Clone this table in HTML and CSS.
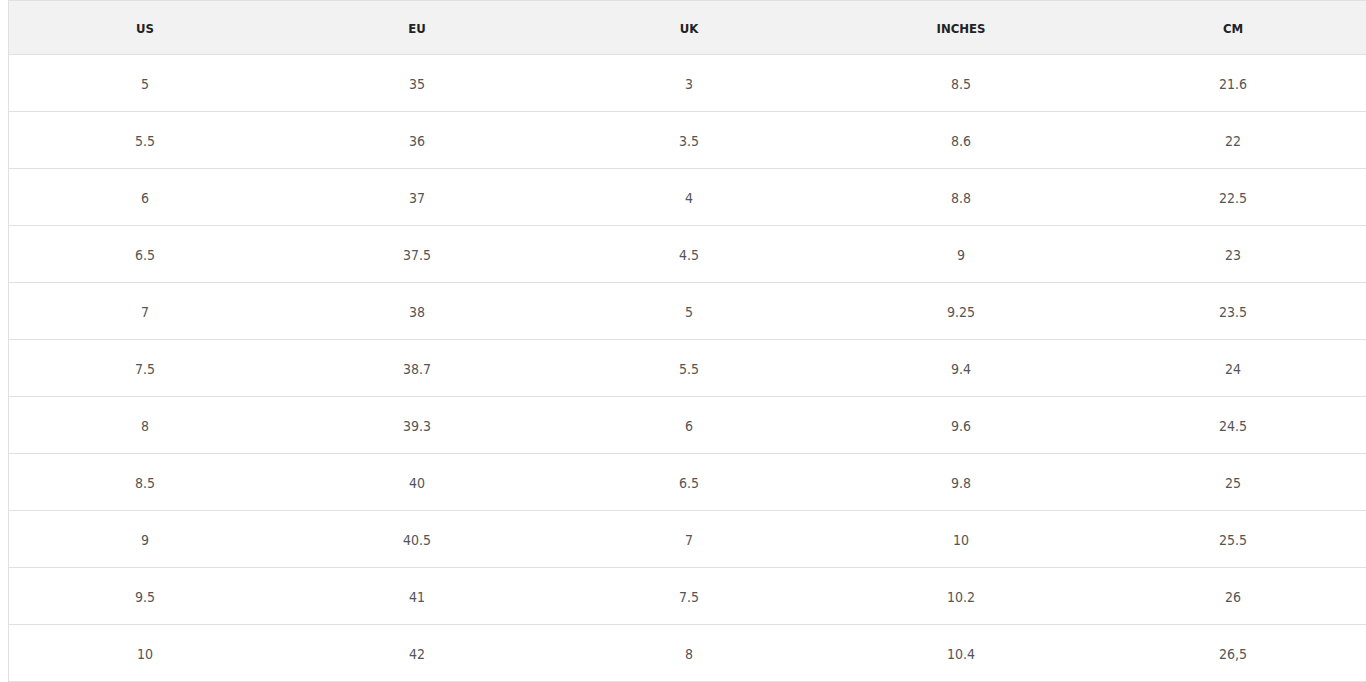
FILE: index.html
```html
<!DOCTYPE html>
<html>
<head>
<meta charset="utf-8">
<link rel="stylesheet" href="styles.css">
</head>
<body>
<div class="chart">
  <div class="row head"><div>US</div><div>EU</div><div>UK</div><div>INCHES</div><div>CM</div></div>
  <div class="row"><div>5</div><div>35</div><div>3</div><div>8.5</div><div>21.6</div></div>
  <div class="row"><div>5.5</div><div>36</div><div>3.5</div><div>8.6</div><div>22</div></div>
  <div class="row"><div>6</div><div>37</div><div>4</div><div>8.8</div><div>22.5</div></div>
  <div class="row"><div>6.5</div><div>37.5</div><div>4.5</div><div>9</div><div>23</div></div>
  <div class="row"><div>7</div><div>38</div><div>5</div><div>9.25</div><div>23.5</div></div>
  <div class="row"><div>7.5</div><div>38.7</div><div>5.5</div><div>9.4</div><div>24</div></div>
  <div class="row"><div>8</div><div>39.3</div><div>6</div><div>9.6</div><div>24.5</div></div>
  <div class="row"><div>8.5</div><div>40</div><div>6.5</div><div>9.8</div><div>25</div></div>
  <div class="row"><div>9</div><div>40.5</div><div>7</div><div>10</div><div>25.5</div></div>
  <div class="row"><div>9.5</div><div>41</div><div>7.5</div><div>10.2</div><div>26</div></div>
  <div class="row"><div>10</div><div>42</div><div>8</div><div>10.4</div><div>26,5</div></div>
</div>
</body>
</html>
```
FILE: styles.css
```css
html { overflow: hidden; }
body {
  margin: 0 0 0 8px;
  background: #fff;
  font-family: "DejaVu Sans Condensed", "DejaVu Sans", sans-serif;
}
.chart {
  width: 1360px;
  border-left: 1px solid #e0e0e0;
  border-top: 1px solid #e0e0e0;
}
.row {
  display: grid;
  grid-template-columns: repeat(5, 1fr);
  height: 56px;
  box-sizing: content-box;
  border-bottom: 1px solid #e0e0e0;
  align-items: center;
  text-align: center;
  font-size: 14px;
  color: #555;
  padding-top: 0;
}
.row > div {
  padding-top: 2px;
}
.row.head {
  height: 53px;
  background: #f2f2f2;
  font-weight: bold;
  color: #222;
  font-size: 13px;
}
```
